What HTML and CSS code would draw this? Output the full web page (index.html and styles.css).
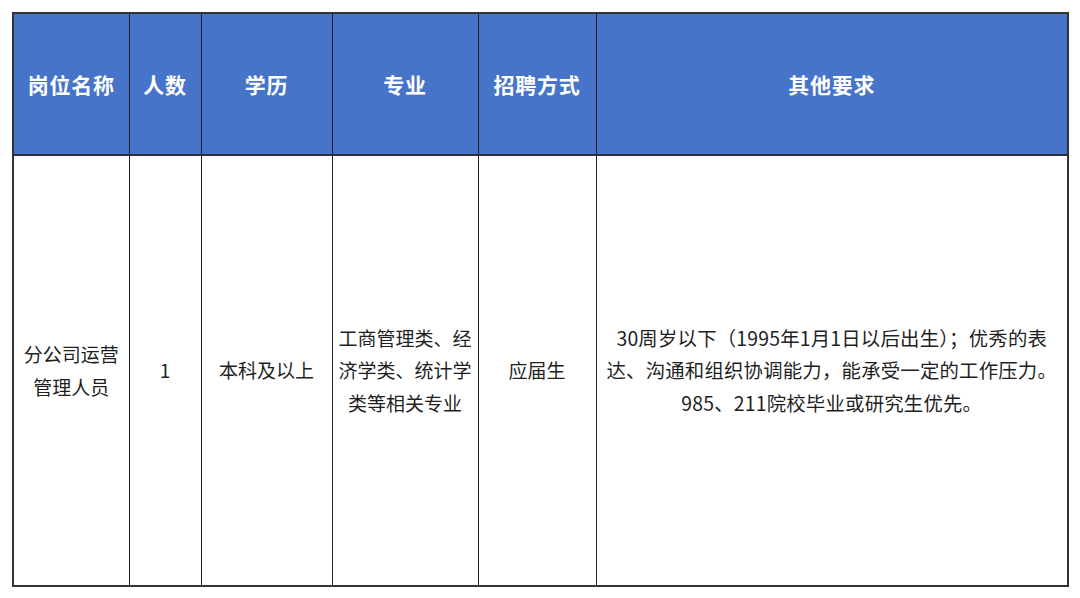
FILE: index.html
```html
<!DOCTYPE html>
<html lang="zh-CN">
<head>
<meta charset="utf-8">
<title>招聘岗位</title>
<link rel="stylesheet" href="styles.css">
</head>
<body>
<table class="jobs">
  <colgroup>
    <col class="c-name">
    <col class="c-num">
    <col class="c-edu">
    <col class="c-major">
    <col class="c-way">
    <col class="c-other">
  </colgroup>
  <thead>
    <tr class="head">
      <th>岗位名称</th>
      <th>人数</th>
      <th>学历</th>
      <th>专业</th>
      <th>招聘方式</th>
      <th>其他要求</th>
    </tr>
  </thead>
  <tbody>
    <tr class="row">
      <td>分公司运营<br>管理人员</td>
      <td>1</td>
      <td>本科及以上</td>
      <td>工商管理类、经<br>济学类、统计学<br>类等相关专业</td>
      <td>应届生</td>
      <td class="other">30周岁以下（1995年1月1日以后出生）；优秀的表<br>达、沟通和组织协调能力，能承受一定的工作压力。<br>985、211院校毕业或研究生优先。</td>
    </tr>
  </tbody>
</table>
</body>
</html>
```

FILE: styles.css
```css
html, body {
  margin: 0;
  padding: 0;
  background: #ffffff;
}

body {
  padding: 12px 0 0 12px;
  font-family: "Noto Sans CJK SC", "Noto Sans", sans-serif;
}

.jobs {
  border-collapse: collapse;
  table-layout: fixed;
  width: 1055px;
  border: 2px solid #333333;
}

.c-name { width: 116px; }
.c-num { width: 72px; }
.c-edu { width: 131px; }
.c-major { width: 146px; }
.c-way { width: 118px; }
.c-other { width: 472px; }

.jobs th,
.jobs td {
  border: 1.5px solid #1e1e1e;
  text-align: center;
  vertical-align: middle;
  padding: 0;
}

.head th {
  height: 140px;
  background: #4674c9;
  color: #ffffff;
  font-weight: 700;
  font-size: 21px;
  letter-spacing: 0.8px;
  border-bottom: 2px solid #2a2f3a;
}

.row td {
  height: 429px;
  color: #1f1f1f;
  font-size: 19px;
  line-height: 32.5px;
  white-space: nowrap;
}

.row td.other {
  font-size: 19.4px;
  letter-spacing: 0.2px;
}
```
